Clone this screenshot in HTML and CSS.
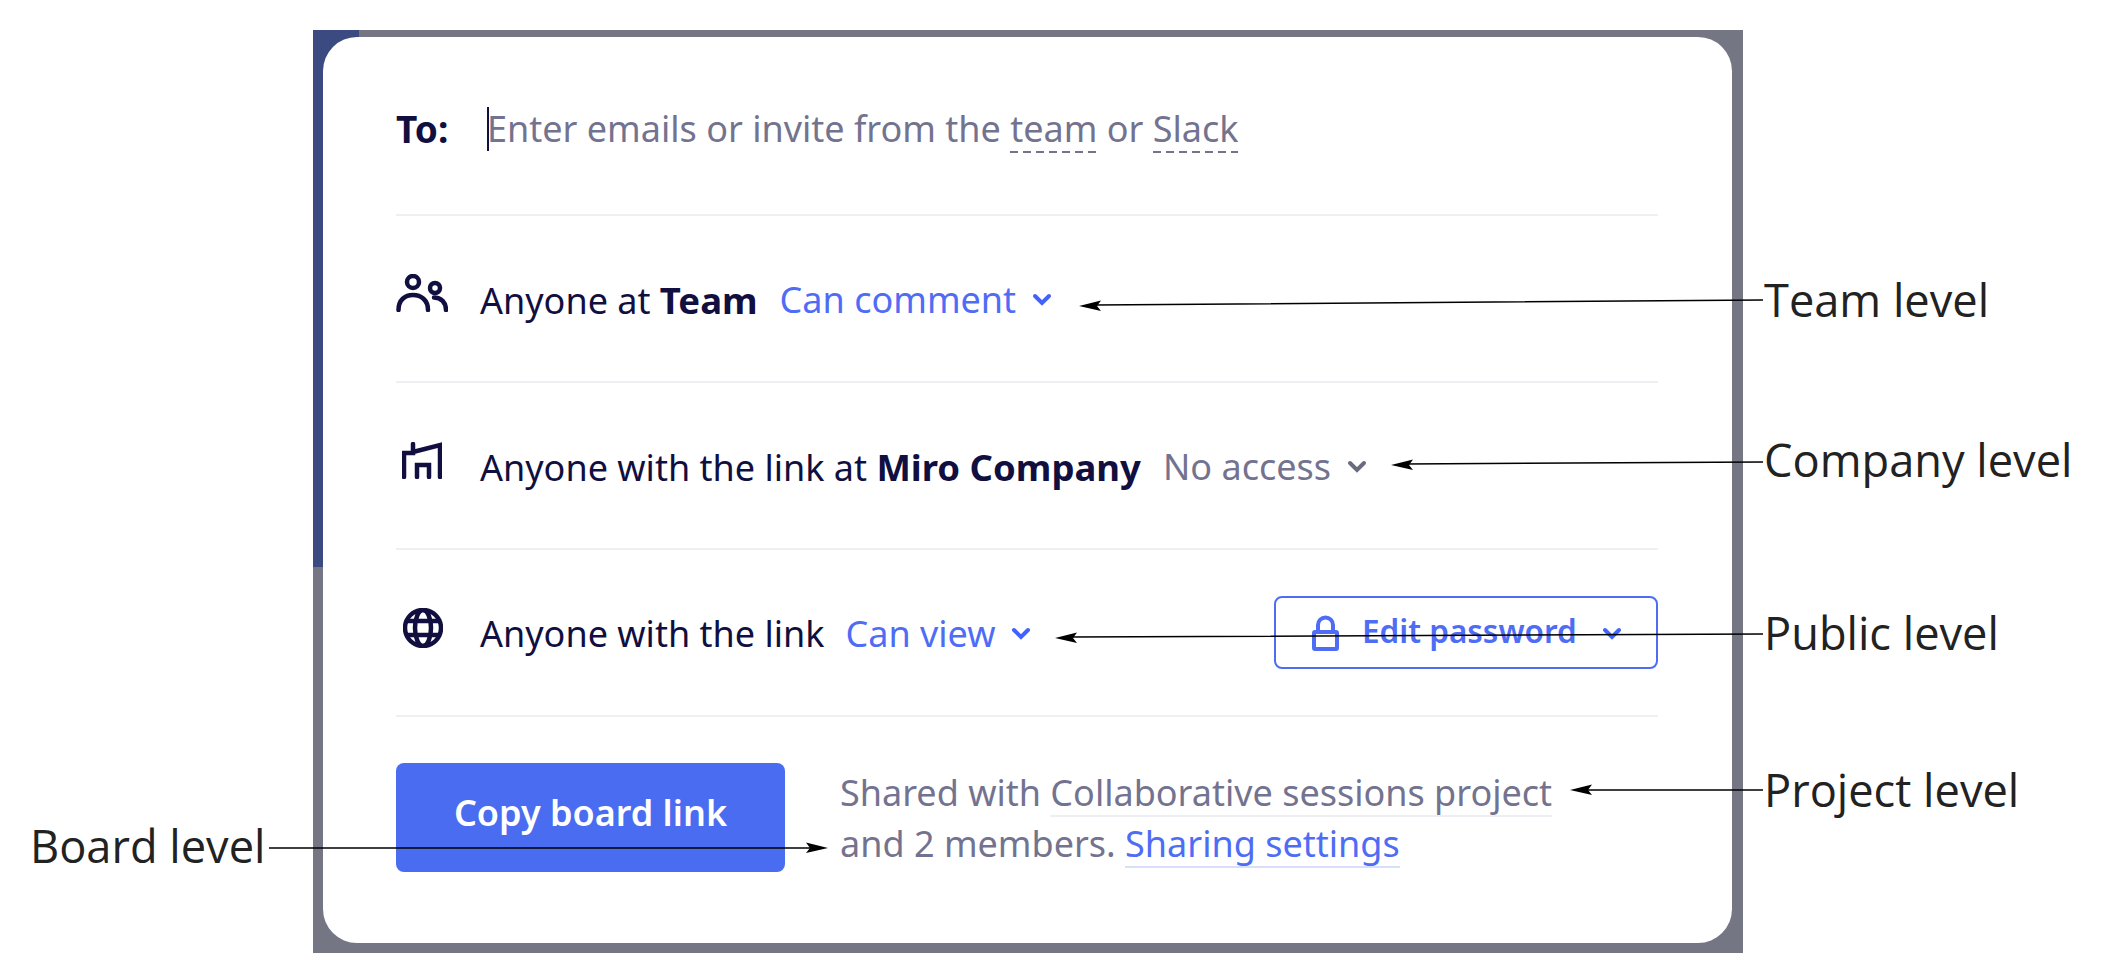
FILE: index.html
```html
<!DOCTYPE html>
<html lang="en">
<head>
    <meta charset="UTF-8">
    <title>Board sharing levels</title>
    <link rel="stylesheet" href="styles.css">
</head>
<body>
    <div class="frame">
        <div class="card">
            <div class="row row-to">
                <span class="to-label">To:</span>
                <span class="caret"></span>
                <span class="placeholder">Enter emails or invite from the <span class="dashed">team</span> or <span class="dashed">Slack</span></span>
            </div>
            <div class="row">
                <svg class="icon icon-team" viewBox="0 0 52 38">
                    <circle cx="17" cy="8" r="6"/>
                    <circle cx="39" cy="14" r="5"/>
                    <path d="M2.500 36c0-10 6.500-15 14.500-15s15 5 15 15M38 23.500c7 0 12 5 12 12.500"/>
                </svg>
                <span class="row-text">Anyone at <b>Team</b></span>
                <span class="level level-on">Can comment</span>
                <svg class="chevron chevron-on" viewBox="0 0 18 12"><path d="M2 2l7 7 7-7"/></svg>
            </div>
            <div class="row">
                <svg class="icon icon-company" viewBox="0 0 40 37">
                    <path d="M2 35V11H11V2M11 10L38 3V35M15 35V23H27V35"/>
                </svg>
                <span class="row-text">Anyone with the link at <b>Miro Company</b></span>
                <span class="level level-off">No access</span>
                <svg class="chevron chevron-off" viewBox="0 0 18 12"><path d="M2 2l7 7 7-7"/></svg>
            </div>
            <div class="row">
                <svg class="icon icon-globe" viewBox="0 0 40 40">
                    <circle cx="20" cy="20" r="18"/>
                    <ellipse cx="20" cy="20" rx="8" ry="18"/>
                    <path d="M4 13H36M4 27H36"/>
                </svg>
                <span class="row-text">Anyone with the link</span>
                <span class="level level-on">Can view</span>
                <svg class="chevron chevron-on" viewBox="0 0 18 12"><path d="M2 2l7 7 7-7"/></svg>
                <button class="password-btn">
                    <svg class="lock" viewBox="0 0 27 36">
                        <rect x="2" y="17" width="23" height="17" rx="1"/>
                        <path d="M6 17V10a7.500 7.500 0 0 1 15 0V17"/>
                    </svg>
                    <span>Edit password</span>
                    <svg class="chevron chevron-on" viewBox="0 0 18 12"><path d="M2 2l7 7 7-7"/></svg>
                </button>
            </div>
            <div class="row row-last">
                <button class="copy-btn">Copy board link</button>
                <p class="shared">Shared with <a class="link-project">Collaborative sessions project</a><br>and 2 members. <a class="link-settings">Sharing settings</a></p>
            </div>
        </div>
    </div>

    <svg class="arrows" viewBox="0 0 2110 966">
        <path d="M1763 300L1095 305M1763 462L1405 464M1763 634L1070 637M1763 790L1585 790M269 848L812 848"/>
        <polygon points="1079,306 1101,300.500 1097,306 1101,311"/>
        <polygon points="1391,465 1413,459.500 1409,465 1413,470"/>
        <polygon points="1055,638 1077,632.500 1073,638 1077,643"/>
        <polygon points="1570,790 1592,784.500 1588,790 1592,795"/>
        <polygon points="828,848 806,842.500 810,848 806,853"/>
    </svg>
    <span class="note note-team">Team level</span>
    <span class="note note-company">Company level</span>
    <span class="note note-public">Public level</span>
    <span class="note note-project">Project level</span>
    <span class="note note-board">Board level</span>
</body>
</html>
```

FILE: styles.css
```css
body {
    font-family: "Noto Sans", "Open Sans", sans-serif;
    background-color: #fff;
    margin: 0;
    width: 2110px;
    height: 966px;
    position: relative;
    overflow: hidden;
}

.frame {
    position: relative;
    box-sizing: border-box;
    width: 1430px;
    height: 923px;
    margin-left: 313px;
    padding: 7px 11px 10px 10px;
    background-color: #747684;
    top: 30px;
}

.frame:before {
    content: '';
    position: absolute;
    left: 0;
    top: 0;
    width: 46px;
    height: 537px;
    background-color: #3c4a82;
}

.card {
    position: relative;
    box-sizing: border-box;
    height: 100%;
    padding: 0 74px 0 73px;
    background-color: #fff;
    border-radius: 34px;
}

.row {
    display: flex;
    align-items: center;
    height: 167px;
    padding-top: 2px;
    border-bottom: 2px solid #eeeff2;
    box-sizing: border-box;
    font-size: 36px;
    color: #100f3f;
}

.row b {
    font-size: 36.500px;
    margin-right: 1px;
}

.row-to {
    height: 179px;
    padding-top: 6px;
}

.row-last {
    border-bottom: 0;
    align-items: flex-start;
    padding-top: 46px;
    height: auto;
}

.to-label {
    font-weight: 700;
    font-size: 37px;
    width: 91px;
}

.caret {
    width: 2px;
    height: 44px;
    margin-right: -2px;
    background-color: #100f3f;
}

.placeholder {
    color: #737390;
}

.dashed {
    background: repeating-linear-gradient(to right, #737390 0, #737390 8px, transparent 8px, transparent 13px) left bottom / 100% 2px no-repeat;
}

.icon {
    fill: none;
    stroke: #100f3f;
    stroke-width: 4.500;
    stroke-linecap: round;
    margin-bottom: 14px;
}

.icon-team {
    width: 52px;
    height: 38px;
    margin-right: 32px;
}

.icon-company {
    width: 40px;
    height: 37px;
    margin: 0 38px 12px 6px;
}

.icon-globe {
    width: 40px;
    height: 40px;
    margin: 0 37px 12px 7px;
}

.level {
    margin-left: 21px;
}

.level-on {
    color: #4f6cf5;
}

.level-off {
    color: #737390;
}

.chevron {
    width: 18px;
    height: 12px;
    margin-left: 17px;
    fill: none;
    stroke-width: 4;
    stroke-linecap: round;
    overflow: visible;
}

.chevron-on {
    stroke: #4262ff;
}

.chevron-off {
    stroke: #6b6b80;
}

.password-btn {
    display: flex;
    align-items: center;
    width: 384px;
    height: 73px;
    margin: -2px 0 0 auto;
    padding: 0 0 5px 36px;
    box-sizing: border-box;
    border: 2px solid #4f6cf5;
    border-radius: 8px;
    background-color: #fff;
    color: #4f6cf5;
    font-family: inherit;
    font-size: 31.500px;
    font-weight: 600;
}

.password-btn .chevron {
    margin-left: 26px;
    margin-top: 8px;
}

.lock {
    width: 27px;
    height: 36px;
    margin: 5px 23px 0 0;
    fill: none;
    stroke: #4f6cf5;
    stroke-width: 4;
}

.copy-btn {
    width: 389px;
    height: 109px;
    padding: 0 0 10px;
    border: 0;
    border-radius: 8px;
    background-color: #4a6cf0;
    color: #fff;
    font-family: inherit;
    font-size: 36px;
    font-weight: 600;
}

.shared {
    margin: 4px 0 0 55px;
    line-height: 51px;
    color: #737390;
}

.link-project {
    background: linear-gradient(#eeeff2, #eeeff2) left bottom / 100% 2px no-repeat;
}

.link-settings {
    color: #4f6cf5;
    background: linear-gradient(#d8dffc, #d8dffc) left bottom / 100% 2px no-repeat;
}

/* annotations on top of the screenshot */
.arrows {
    position: absolute;
    left: 0;
    top: 0;
    width: 2110px;
    height: 966px;
    fill: #000;
}

.arrows path {
    fill: none;
    stroke: #000;
    stroke-width: 1.500;
}

.note {
    position: absolute;
    left: 1764px;
    font-family: "Open Sans", sans-serif;
    font-size: 45.200px;
    line-height: 60px;
    color: #222;
}

.note-team { top: 270px; }
.note-company { top: 430px; }
.note-public { top: 603px; }
.note-project { top: 760px; }
.note-board { top: 816px; left: 30px; }
```
